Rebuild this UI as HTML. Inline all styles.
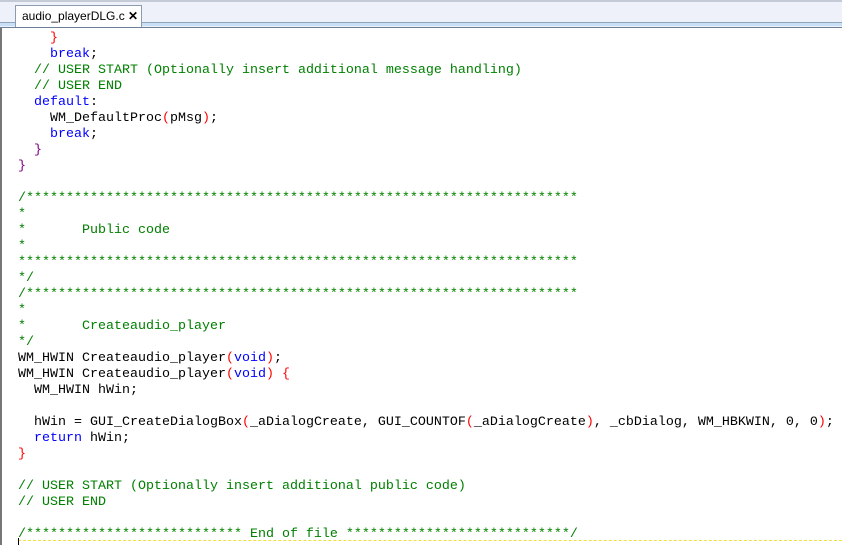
<!DOCTYPE html>
<html><head><style>
body{margin:0;width:842px;height:545px;overflow:hidden;background:#fff;position:relative;font-family:"Liberation Sans",sans-serif}
.bar{position:absolute;left:0;top:0;width:842px;height:27px;background:#eef0fa;border-bottom:1px solid #6d7f96}
.bar:after{content:"";position:absolute;left:0;right:0;top:22px;height:3px;background:#c9dff5;border-top:1px solid #8fa5bc}
.topl{position:absolute;left:0;top:0;width:842px;height:2px;background:#c4cad6}
.tab{position:absolute;left:15px;top:5px;width:127px;height:22px;background:#fff;border:1px solid #8d9bb0;border-bottom:none;z-index:2;font-size:12px;line-height:20px;padding-left:6px;box-sizing:border-box;color:#000;white-space:nowrap}
.tab b{position:absolute;left:112px;top:0;font-weight:bold;font-size:12px}
.ed{position:absolute;left:0;top:28px;width:842px;height:517px;border-left:2px solid #777;box-sizing:border-box}
pre{position:absolute;left:18px;top:31px;margin:0;font-family:"Liberation Mono",monospace;font-size:13.33px;line-height:16px;color:#000}
.c{color:#008000}.k{color:#0000ff}.p{color:#ff0000}.m{color:#800080}
.hl{position:absolute;left:18px;right:0;top:540px;border-top:1px dashed #f0e040}
.cur{position:absolute;left:18px;top:538px;width:1px;height:7px;background:#000}
</style></head><body>
<div class="bar"></div><div class="topl"></div>
<div class="tab">audio_playerDLG.c<b>✕</b></div>
<div class="ed"></div>
<pre>    <span class="p">}</span>
    <span class="k">break</span>;
  <span class="c">// USER START (Optionally insert additional message handling)</span>
  <span class="c">// USER END</span>
  <span class="k">default</span>:
    WM_DefaultProc<span class="p">(</span>pMsg<span class="p">)</span>;
    <span class="k">break</span>;
  <span class="m">}</span>
<span class="m">}</span>

<span class="c">/*********************************************************************
*
*       Public code
*
**********************************************************************
*/</span>
<span class="c">/*********************************************************************
*
*       Createaudio_player
*/</span>
WM_HWIN Createaudio_player<span class="p">(</span><span class="k">void</span><span class="p">)</span>;
WM_HWIN Createaudio_player<span class="p">(</span><span class="k">void</span><span class="p">)</span> <span class="p">{</span>
  WM_HWIN hWin;

  hWin = GUI_CreateDialogBox<span class="p">(</span>_aDialogCreate, GUI_COUNTOF<span class="p">(</span>_aDialogCreate<span class="p">)</span>, _cbDialog, WM_HBKWIN, 0, 0<span class="p">)</span>;
  <span class="k">return</span> hWin;
<span class="p">}</span>

<span class="c">// USER START (Optionally insert additional public code)</span>
<span class="c">// USER END</span>

<span class="c">/*************************** End of file ****************************/</span></pre>
<div class="hl"></div><div class="cur"></div>
</body></html>
